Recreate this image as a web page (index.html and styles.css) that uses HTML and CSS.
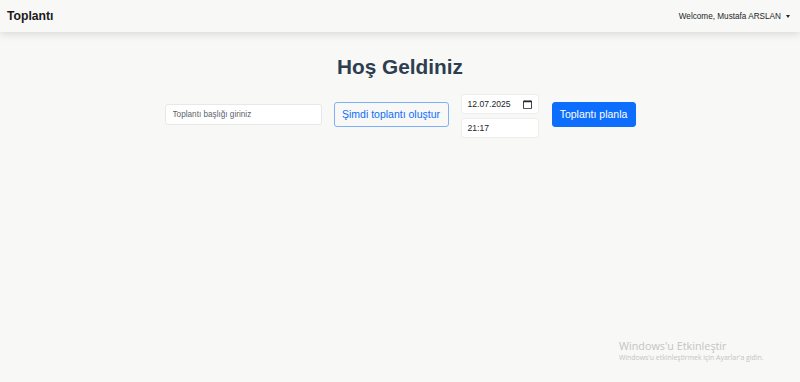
FILE: index.html
```html
<!DOCTYPE html>
<html lang="tr">
  <head>
    <meta charset="UTF-8" />
    <meta name="viewport" content="width=device-width, initial-scale=1.0" />
    <title>Toplantı</title>
    <link rel="stylesheet" href="styles.css">
  </head>
  <body>
    <!-- Navbar -->
    <nav class="navbar">
      <span class="brand">Toplantı</span>
      <span class="user-menu">Welcome, Mustafa ARSLAN <span class="caret"></span></span>
    </nav>

    <main class="main">
      <h1>Hoş Geldiniz</h1>
      <div class="meeting-row">
        <input type="text" class="title-input" placeholder="Toplantı başlığı giriniz" />
        <button class="btn btn-outline">Şimdi toplantı oluştur</button>
        <div class="datetime">
          <div class="field">
            <span>12.07.2025</span>
            <svg width="9" height="9" viewBox="0 0 16 16" fill="#212529">
              <path d="M3.5 0a.5.5 0 0 1 .5.5V1h8V.5a.5.5 0 0 1 1 0V1h1a2 2 0 0 1 2 2v11a2 2 0 0 1-2 2H2a2 2 0 0 1-2-2V3a2 2 0 0 1 2-2h1V.5a.5.5 0 0 1 .5-.5zM1.5 4v10a.5.5 0 0 0 .5.5h12a.5.5 0 0 0 .5-.5V4z" />
            </svg>
          </div>
          <div class="field">
            <span>21:17</span>
          </div>
        </div>
        <button class="btn btn-primary">Toplantı planla</button>
      </div>
    </main>

    <div class="activate">
      <div class="activate-title">Windows'u Etkinleştir</div>
      <div class="activate-sub">Windows'u etkinleştirmek için Ayarlar'a gidin.</div>
    </div>
  </body>
</html>
```

FILE: styles.css
```css
body {
  margin: 0;
  height: 382px;
  background-color: #f8f8f6;
  font-family: "Liberation Sans", Arial, sans-serif;
  color: #212529;
  overflow: hidden;
}
.navbar {
  height: 32px;
  display: flex;
  justify-content: space-between;
  align-items: center;
  padding: 0 10px 0 7px;
  background-color: #f8f8f6;
  box-shadow: 0 2px 8px rgba(0, 0, 0, 0.13);
}
.brand {
  font-size: 12.2px;
  font-weight: bold;
  color: #1a1a1a;
}
.user-menu {
  font-size: 8.2px;
  color: #212529;
  display: flex;
  align-items: center;
  gap: 5px;
}
.caret {
  width: 0;
  height: 0;
  border-left: 2.5px solid transparent;
  border-right: 2.5px solid transparent;
  border-top: 3px solid #212529;
}
.main {
  padding-top: 22px;
  text-align: center;
}
h1 {
  margin: 0 0 14px;
  font-size: 20.8px;
  line-height: 26px;
  color: #2c3e50;
}
.meeting-row {
  display: flex;
  justify-content: center;
  align-items: center;
}
.title-input {
  width: 157px;
  height: 21px;
  box-sizing: border-box;
  border: 1px solid #e8e8e8;
  border-radius: 3px;
  background: #fff;
  padding: 0 7px;
  font-family: inherit;
  font-size: 8.2px;
  margin: 0 12px 4px 0;
}
.title-input::placeholder {
  color: #5c636a;
}
.btn {
  height: 25px;
  box-sizing: border-box;
  border-radius: 3px;
  font-family: inherit;
  font-size: 10.5px;
  padding: 0;
  white-space: nowrap;
  margin-bottom: 4px;
}
.btn-outline {
  width: 115px;
  background: transparent;
  border: 1px solid #7fb0fa;
  color: #0d6efd;
  margin-right: 12px;
}
.btn-primary {
  width: 84px;
  background: #0d6efd;
  border: 1px solid #0d6efd;
  color: #fff;
  margin-left: 13px;
}
.datetime {
  display: flex;
  flex-direction: column;
  gap: 4px;
}
.field {
  width: 78px;
  height: 20px;
  box-sizing: border-box;
  display: flex;
  justify-content: space-between;
  align-items: center;
  padding: 0 6px;
  background: #fff;
  border: 1px solid #ededed;
  border-radius: 3px;
  font-size: 8.6px;
}
.activate {
  position: absolute;
  left: 619px;
  top: 339px;
  font-family: "Open Sans", sans-serif;
  color: #c4c4c4;
}
.activate-title {
  font-size: 10.8px;
  line-height: 14px;
}
.activate-sub {
  font-size: 6.9px;
  line-height: 10px;
}
```
